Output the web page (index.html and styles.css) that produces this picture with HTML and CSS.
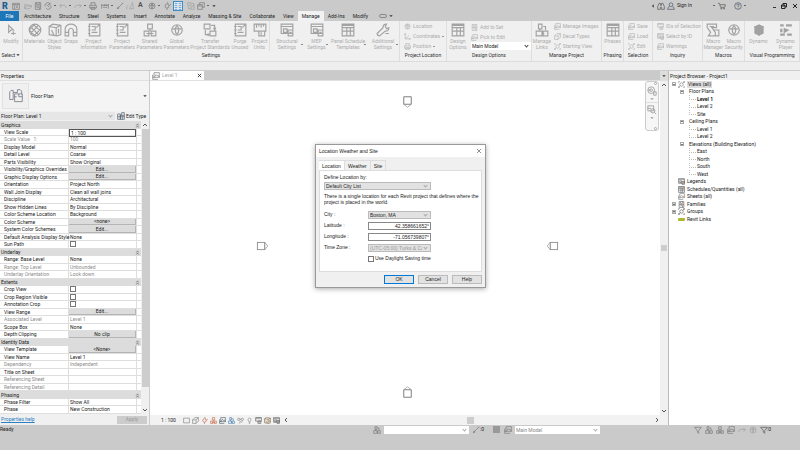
FILE: index.html
```
<!DOCTYPE html>
<html lang="en">
<head>
<meta charset="utf-8">
<title>Project1 - Floor Plan: Level 1</title>
<link rel="stylesheet" href="styles.css">
</head>
<body>
<svg class="defs" aria-hidden="true">
  <symbol id="i-home" viewBox="0 0 12 12"><path d="M1 2h10v9H1zM1 4h10M4 4v7M6 6h3M6 8h3"/></symbol>
  <symbol id="i-open" viewBox="0 0 12 12"><path d="M1 10V4h4l1 1h4v2M1 10l3-4h8l-3 4z"/></symbol>
  <symbol id="i-save" viewBox="0 0 12 12"><path d="M2 1h8v10H2zM4 1v3h4V1M2 6h8M4 8h4v3"/></symbol>
  <symbol id="i-sync" viewBox="0 0 12 12"><path d="M2 7a4 4 0 0 1 7-4M10 5a4 4 0 0 1-7 4M9 1v3H6M4 4l4 4"/></symbol>
  <symbol id="i-undo" viewBox="0 0 12 12"><path d="M4 3L1 6l3 2M1 5h7q3 0 3 4"/></symbol>
  <symbol id="i-redo" viewBox="0 0 12 12"><path d="M8 3l3 3-3 2M11 5H4Q1 5 1 9"/></symbol>
  <symbol id="i-print" viewBox="0 0 12 12"><path d="M3 5V1h6v4M1 5h10v4H1zM3 8h6v3H3z"/></symbol>
  <symbol id="i-measure" viewBox="0 0 12 12"><path d="M1 3v7M11 3v7M1 5h10M3 8h6M5 3v3M8 3v3"/></symbol>
  <symbol id="i-line" viewBox="0 0 12 12"><path d="M2 10L10 2M2 10l1-3M2 10l3-1M9 1l2 2"/></symbol>
  <symbol id="i-tag" viewBox="0 0 12 12"><path d="M1 11V7l3-3M5 10l5-8 1 8zM9 2V0"/></symbol>
  <symbol id="i-globe" viewBox="0 0 12 12"><circle cx="6" cy="6" r="4.500"/><path d="M2 5h8M6 2q-3 4 0 8M6 2q3 4 0 8"/></symbol>
  <symbol id="i-thin" viewBox="0 0 12 12"><path d="M1 2h4M1 5h4M1 8h4M1 11h4M7 2h4M7 5h4M7 8h4M7 11h4"/></symbol>
  <symbol id="i-windows" viewBox="0 0 12 12"><path d="M1 4h7v7H1zM4 4V1h7v7H8M1 6h7"/></symbol>
  <symbol id="i-section" viewBox="0 0 12 12"><circle cx="6" cy="6" r="3"/><path d="M6 0l2 3M6 9v3M9 6l3-3"/></symbol>
  <symbol id="i-cursor" viewBox="0 0 12 12"><path d="M4 2v6l2-2 2 0zM8 7v3M6 9h4"/></symbol>
  <symbol id="i-material" viewBox="0 0 12 12"><circle cx="6" cy="6" r="5"/><path d="M2 3l7 7M4 1l7 6M1 6l5 5M9 2l-7 7M11 5l-6 6M6 1L1 6"/></symbol>
  <symbol id="i-object" viewBox="0 0 12 12"><path d="M1 3l3-2 7 1v8l-3 1-7-1zM1 3l6 1v7M7 4l4-2M3 6l2 4M9 5v4"/></symbol>
  <symbol id="i-snap" viewBox="0 0 12 12"><path d="M1 11V5a5 4 0 0 1 10 0v6H8V6q-2-3-4 0v5zM1 8h3M8 8h3"/></symbol>
  <symbol id="i-sheet" viewBox="0 0 12 12"><path d="M2 1h9v10H2zM4 3h3v3H4M8 4l3-3M4 8h5M1 3h2M1 6h2M1 9h2"/></symbol>
  <symbol id="i-shared" viewBox="0 0 12 12"><path d="M4 1h4v4H4zM1 7h4v4H1zM7 7h4v4H7zM6 5v2M3 9h6"/></symbol>
  <symbol id="i-transfer" viewBox="0 0 12 12"><path d="M1 1h5v4H1zM6 7h5v4H6zM7 2h3v3M9 4l1 2 1-2M2 6v4h3M4 9l1 1-1 1"/></symbol>
  <symbol id="i-units" viewBox="0 0 12 12"><path d="M1 1h10v6H1zM3 1v3M5 1v2M7 1v3M9 1v2M5 7h5v4H5zM7 8v2"/></symbol>
  <symbol id="i-grid" viewBox="0 0 12 12"><path d="M1 1h10v10H1zM1 4h10M1 7h10M5 4v7M8 4v7M1 2h10"/></symbol>
  <symbol id="i-struct" viewBox="0 0 12 12"><path d="M1 1h10v8H1zM1 3h10M3 5h3v3H3zM7 6h4v5H7zM8 8h2"/></symbol>
  <symbol id="i-wrench" viewBox="0 0 12 12"><path d="M1 9l5-5q0-3 3-3L8 3l1 2 2-1q0 3-3 3l-5 4q-2 0-2-2zM8 9h3"/></symbol>
  <symbol id="i-axes" viewBox="0 0 12 12"><path d="M2 1v9h9M2 10l7-6M1 3l1-2 1 2M9 9l2 1-2 1"/></symbol>
  <symbol id="i-links" viewBox="0 0 12 12"><path d="M1 7h5v4H1zM3 1h3v4H3zM7 3h2v3M7 7h4v4H7zM6 9h2M4 5v2"/></symbol>
  <symbol id="i-image" viewBox="0 0 12 12"><path d="M3 1h8v7H3zM1 4v7h8M4 7l2-3 2 2 1-1 2 3M1 8h3"/></symbol>
  <symbol id="i-macro" viewBox="0 0 12 12"><path d="M1 1h8v3H5l3 4v3H2l2-3-3-4zM7 6h4v5H8M3 3h4"/></symbol>
  <symbol id="i-cube" viewBox="0 0 12 12"><path class="solid" d="M2 3l4-2 4 2v6l-4 2-4-2z"/><path d="M2 3l4 2 4-2M6 5v6"/></symbol>
  <symbol id="i-player" viewBox="0 0 12 12"><path class="solid" d="M1 1h3v2H1zM6 1h5v2H6zM1 5h2v3H1zM4 4l5 2-5 3zM1 9h4v2H1zM7 9h4v2H7z"/></symbol>
  <symbol id="i-plan" viewBox="0 0 20 20"><path d="M1 15V4l2-2h3v3h6M1 15h5M12 5V1h4l2 2v4M8 7h11v11H8zM8 11h3M14 7v4h5M6 5v10"/></symbol>
  <symbol id="i-edit" viewBox="0 0 12 12"><path d="M1 3h4v8H1zM5 5h6v6H5zM7 5V1h4v4M1 7h10M8 7v4"/></symbol>
  <symbol id="i-view" viewBox="0 0 12 12"><circle cx="6" cy="6" r="3"/><path d="M1 3V1h2M9 1h2v2M11 9v2H9M3 11H1V9M4 8L1 11M8 4l3-3"/></symbol>
  <symbol id="i-person" viewBox="0 0 12 12"><circle cx="6" cy="4" r="2.800"/><path d="M4 7q-3 0-3 4h10q0-4-3-4"/></symbol>
  <symbol id="i-binoc" viewBox="0 0 12 12"><path d="M3 2h2l1 3 1-3h2l2 5v4H7V8H5v3H1V7zM5 5h2"/></symbol>
  <symbol id="i-cart" viewBox="0 0 12 12"><path d="M0 2h2l2 6h6l1-4H3"/><circle cx="5" cy="10" r=".8"/><circle cx="9" cy="10" r=".8"/></symbol>
  <symbol id="i-help" viewBox="0 0 12 12"><circle cx="6" cy="6" r="5"/><path d="M4 5q0-2 2-2t2 1.500q0 1-2 2V8M6 9v.6"/></symbol>
  <symbol id="i-funnel" viewBox="0 0 12 12"><path d="M1 2h10L7 7v4L5 9V7z"/></symbol>
  <symbol id="i-box3d" viewBox="0 0 12 12"><path d="M1 5h6v6H1zM1 5l4-4h6v6l-4 4M7 5l4-4"/></symbol>
  <symbol id="i-box" viewBox="0 0 12 12"><path d="M1 2h10v8H1z"/></symbol>
  <symbol id="i-glasses" viewBox="0 0 12 12"><circle cx="3" cy="4" r="2"/><circle cx="9" cy="4" r="2"/><path d="M5 4h2M6 7l-2 4M9 7l-2 3"/></symbol>
  <symbol id="i-bulb" viewBox="0 0 12 12"><path d="M5 9q0-2-1-3a2.500 2.500 0 1 1 4 0q-1 1-1 3zM5 11h2"/></symbol>
  <symbol id="i-x" viewBox="0 0 12 12"><path d="M2 2l8 8M10 2l-8 8"/></symbol>
  <symbol id="i-down" viewBox="0 0 12 12"><path d="M2 4l4 4 4-4"/></symbol>
  <symbol id="i-up" viewBox="0 0 12 12"><path d="M2 8l4-4 4 4"/></symbol>
  <symbol id="i-dblup" viewBox="0 0 12 12"><path d="M3 6l3-4 3 4M3 11l3-4 3 4"/></symbol>
  <symbol id="i-tri" viewBox="0 0 12 12"><path class="solid" d="M1 4h10L6 9z"/></symbol>
  <symbol id="i-orbit" viewBox="0 0 12 12"><circle cx="5" cy="5" r="4"/><circle cx="5" cy="5" r="1.500"/><path d="M8 7h3v4H8zM1 5h3"/></symbol>
  <symbol id="i-zoomr" viewBox="0 0 12 12"><path d="M1 1h7v6H1zM1 4h4M9 9l2 2"/><circle cx="7" cy="7" r="2.500"/></symbol>
  <symbol id="i-mark" viewBox="0 0 12 16"><path d="M1 1h10v10H1z"/><path class="faint" d="M1 11l5 4 5-4"/></symbol>
</svg>

<header class="top">
  <div class="quick">
    <b class="logo">R</b>
    <svg class="ic"><use href="#i-home"/></svg>
    <svg class="ic pale push"><use href="#i-open"/></svg>
    <svg class="ic"><use href="#i-save"/></svg>
    <svg class="ic"><use href="#i-sync"/></svg><i class="dot"></i>
    <svg class="ic pale"><use href="#i-undo"/></svg><i class="dot"></i>
    <svg class="ic pale"><use href="#i-redo"/></svg><i class="dot"></i>
    <svg class="ic"><use href="#i-print"/></svg>
    <svg class="ic push"><use href="#i-measure"/></svg><i class="dot"></i>
    <svg class="ic"><use href="#i-line"/></svg>
    <svg class="ic pale"><use href="#i-tag"/></svg>
    <b class="letter">A</b>
    <svg class="ic push"><use href="#i-globe"/></svg><i class="dot"></i>
    <svg class="ic"><use href="#i-section"/></svg>
    <span class="thin"><svg class="ic"><use href="#i-thin"/></svg></span>
    <svg class="ic pale push"><use href="#i-transfer"/></svg>
    <svg class="ic"><use href="#i-windows"/></svg><i class="dot"></i>
    <svg class="tri"><use href="#i-tri"/></svg>
    <div class="account">
      <svg class="tri side"><use href="#i-tri"/></svg>
      <svg class="ic dark"><use href="#i-binoc"/></svg>
      <svg class="ic navy"><use href="#i-person"/></svg>
      <span class="sign">Sign In</span>
      <i class="dot"></i>
      <svg class="ic dark"><use href="#i-cart"/></svg>
      <svg class="ic navy helpic"><use href="#i-help"/></svg><i class="dot"></i>
      <span class="winbtns"><i class="min"></i><svg class="ic black"><use href="#i-windows"/></svg><svg class="ic black heavy"><use href="#i-x"/></svg></span>
    </div>
  </div>
  <nav class="tabs">
    <a class="file" href="#file">File</a><a href="#t">Architecture</a><a href="#t">Structure</a><a href="#t">Steel</a><a href="#t">Systems</a><a href="#t">Insert</a><a href="#t">Annotate</a><a href="#t">Analyze</a><a href="#t">Massing &amp; Site</a><a href="#t">Collaborate</a><a href="#t">View</a><a class="on" href="#t">Manage</a><a href="#t">Add-Ins</a><a href="#t">Modify</a>
    <span class="pill"></span><svg class="tri"><use href="#i-tri"/></svg>
  </nav>
</header>

<section class="ribbon">
  <div class="panel">
    <div class="big"><button><svg><use href="#i-cursor"/></svg>Modify</button></div>
    <h2>Select <svg class="tri"><use href="#i-tri"/></svg></h2>
  </div>
  <div class="panel">
    <div class="big settings">
      <button><svg><use href="#i-material"/></svg>Materials</button>
      <button><svg><use href="#i-object"/></svg>Object<br>Styles</button>
      <button><svg><use href="#i-snap"/></svg>Snaps</button>
      <button><svg><use href="#i-sheet"/></svg>Project<br>Information</button>
      <button><svg><use href="#i-sheet"/></svg>Project<br>Parameters</button>
      <button><svg><use href="#i-shared"/></svg>Shared<br>Parameters</button>
      <button><svg><use href="#i-globe"/></svg>Global<br>Parameters</button>
      <button><svg><use href="#i-transfer"/></svg>Transfer<br>Project Standards</button>
      <button><svg><use href="#i-sheet"/></svg>Purge<br>Unused</button>
      <button><svg><use href="#i-units"/></svg>Project<br>Units</button>
      <button class="drop ruled"><svg><use href="#i-struct"/></svg>Structural<br>Settings</button>
      <button class="drop"><svg><use href="#i-struct"/></svg>MEP<br>Settings</button>
      <button class="drop"><svg><use href="#i-grid"/></svg>Panel Schedule<br>Templates</button>
      <button class="drop"><svg><use href="#i-wrench"/></svg>Additional<br>Settings</button>
    </div>
    <h2>Settings</h2>
  </div>
  <div class="panel">
    <div class="small">
      <button><svg><use href="#i-globe"/></svg>Location</button>
      <button><svg><use href="#i-axes"/></svg>Coordinates<i class="dot"></i></button>
      <button><svg><use href="#i-print"/></svg>Position<i class="dot"></i></button>
    </div>
    <h2>Project Location</h2>
  </div>
  <div class="panel">
    <div class="mix options">
      <div class="big"><button><svg><use href="#i-grid"/></svg>Design<br>Options</button></div>
      <div class="small">
        <button><svg><use href="#i-save"/></svg>Add to Set</button>
        <button><svg><use href="#i-image"/></svg>Pick to Edit</button>
        <span class="pick solid-arrow"><select aria-label="Active design option"><option>Main Model</option></select></span>
      </div>
    </div>
    <h2>Design Options</h2>
  </div>
  <div class="panel">
    <div class="mix">
      <div class="big"><button><svg><use href="#i-links"/></svg>Manage<br>Links</button></div>
      <div class="small">
        <button><svg><use href="#i-image"/></svg>Manage Images</button>
        <button><svg><use href="#i-box3d"/></svg>Decal Types</button>
        <button><svg><use href="#i-view"/></svg>Starting View</button>
      </div>
    </div>
    <h2>Manage Project</h2>
  </div>
  <div class="panel">
    <div class="big"><button><svg><use href="#i-grid"/></svg>Phases</button></div>
    <h2>Phasing</h2>
  </div>
  <div class="panel">
    <div class="small">
      <button><svg><use href="#i-image"/></svg>Save</button>
      <button><svg><use href="#i-image"/></svg>Load</button>
      <button><svg><use href="#i-view"/></svg>Edit</button>
    </div>
    <h2>Selection</h2>
  </div>
  <div class="panel">
    <div class="small">
      <button><svg><use href="#i-units"/></svg>IDs of Selection</button>
      <button><svg><use href="#i-struct"/></svg>Select by ID</button>
      <button><svg><use href="#i-image"/></svg>Warnings</button>
    </div>
    <h2>Inquiry</h2>
  </div>
  <div class="panel">
    <div class="big pair">
      <button><svg><use href="#i-macro"/></svg>Macro<br>Manager</button>
      <button><svg><use href="#i-globe"/></svg>Macro<br>Security</button>
    </div>
    <h2>Macros</h2>
  </div>
  <div class="panel">
    <div class="big pair">
      <button><svg><use href="#i-cube"/></svg>Dynamo</button>
      <button><svg><use href="#i-player"/></svg>Dynamo<br>Player</button>
    </div>
    <h2>Visual Programming</h2>
  </div>
</section>
<div class="optbar"></div>

<main class="work">
  <aside class="props">
    <h1>Properties</h1>
    <div class="type"><span class="thumb"><svg><use href="#i-plan"/></svg></span><span>Floor Plan</span><svg class="tri"><use href="#i-tri"/></svg></div>
    <div class="inst"><span class="pick"><select aria-label="Instance"><option>Floor Plan: Level 1</option></select></span><button><svg class="ic navy"><use href="#i-edit"/></svg>Edit Type</button></div>
    <div class="gridwrap">
      <div class="pgrid">
        <div class="grp">Graphics<svg><use href="#i-dblup"/></svg></div>
        <div class="row"><label for="vs">View Scale</label><input id="vs" type="text" value="1 : 100"></div>
        <div class="row off"><span>Scale Value &nbsp; 1:</span><span>100</span></div>
        <div class="row"><span>Display Model</span><span>Normal</span></div>
        <div class="row"><span>Detail Level</span><span>Coarse</span></div>
        <div class="row"><span>Parts Visibility</span><span>Show Original</span></div>
        <div class="row"><span>Visibility/Graphics Overrides</span><button>Edit...</button></div>
        <div class="row"><span>Graphic Display Options</span><button>Edit...</button></div>
        <div class="row"><span>Orientation</span><span>Project North</span></div>
        <div class="row"><span>Wall Join Display</span><span>Clean all wall joins</span></div>
        <div class="row"><span>Discipline</span><span>Architectural</span></div>
        <div class="row"><span>Show Hidden Lines</span><span>By Discipline</span></div>
        <div class="row"><span>Color Scheme Location</span><span>Background</span></div>
        <div class="row"><span>Color Scheme</span><button>&lt;none&gt;</button></div>
        <div class="row"><span>System Color Schemes</span><button>Edit...</button></div>
        <div class="row"><span>Default Analysis Display Style</span><span>None</span></div>
        <div class="row"><label for="sp">Sun Path</label><span><input id="sp" type="checkbox"></span></div>
        <div class="grp">Underlay<svg><use href="#i-dblup"/></svg></div>
        <div class="row"><span>Range: Base Level</span><span>None</span></div>
        <div class="row off"><span>Range: Top Level</span><span>Unbounded</span></div>
        <div class="row off"><span>Underlay Orientation</span><span>Look down</span></div>
        <div class="grp">Extents<svg><use href="#i-dblup"/></svg></div>
        <div class="row"><label for="cv">Crop View</label><span><input id="cv" type="checkbox"></span></div>
        <div class="row"><label for="cr">Crop Region Visible</label><span><input id="cr" type="checkbox"></span></div>
        <div class="row"><label for="ac">Annotation Crop</label><span><input id="ac" type="checkbox"></span></div>
        <div class="row"><span>View Range</span><button>Edit...</button></div>
        <div class="row off"><span>Associated Level</span><span>Level 1</span></div>
        <div class="row"><span>Scope Box</span><span>None</span></div>
        <div class="row"><span>Depth Clipping</span><button>No clip</button></div>
        <div class="grp">Identity Data<svg><use href="#i-dblup"/></svg></div>
        <div class="row"><span>View Template</span><button>&lt;None&gt;</button></div>
        <div class="row"><span>View Name</span><span>Level 1</span></div>
        <div class="row off"><span>Dependency</span><span>Independent</span></div>
        <div class="row"><span>Title on Sheet</span><span></span></div>
        <div class="row off"><span>Referencing Sheet</span><span></span></div>
        <div class="row off"><span>Referencing Detail</span><span></span></div>
        <div class="grp">Phasing<svg><use href="#i-dblup"/></svg></div>
        <div class="row"><span>Phase Filter</span><span>Show All</span></div>
        <div class="row"><span>Phase</span><span>New Construction</span></div>
      </div>
      <div class="vbar"><svg class="arr"><use href="#i-up"/></svg><i class="long"></i><svg class="arr"><use href="#i-down"/></svg></div>
    </div>
    <div class="pfoot"><a href="#help">Properties help</a><button disabled>Apply</button></div>
  </aside>

  <section class="canvas">
    <div class="docs"><span class="doc"><svg class="ic"><use href="#i-image"/></svg>Level 1<svg class="ic black heavy close"><use href="#i-x"/></svg></span><span class="more"><svg class="tri"><use href="#i-tri"/></svg></span></div>
    <div class="sheet">
      <div class="drawing">
        <svg class="mark north"><use href="#i-mark"/></svg>
        <svg class="mark west"><use href="#i-mark"/></svg>
        <svg class="mark east"><use href="#i-mark"/></svg>
        <svg class="mark south"><use href="#i-mark"/></svg>
        <div class="navbar"><i class="ring"></i><svg class="nav"><use href="#i-orbit"/></svg><svg class="tri"><use href="#i-tri"/></svg><hr><svg class="nav green"><use href="#i-zoomr"/></svg><svg class="tri"><use href="#i-tri"/></svg><i class="ring last"></i></div>
      </div>
      <div class="vbar"><svg class="arr"><use href="#i-up"/></svg><i class="short"></i><svg class="arr"><use href="#i-down"/></svg></div>
    </div>
    <div class="vcb">
      <span class="scale">1 : 100</span>
      <svg class="ic"><use href="#i-box"/></svg><svg class="ic"><use href="#i-box3d"/></svg><svg class="ic red"><use href="#i-section"/></svg><svg class="ic red"><use href="#i-shared"/></svg><svg class="ic navy"><use href="#i-image"/></svg><svg class="ic blue"><use href="#i-links"/></svg><svg class="ic"><use href="#i-glasses"/></svg><svg class="ic"><use href="#i-bulb"/></svg><svg class="ic dark"><use href="#i-units"/></svg><svg class="ic brown"><use href="#i-object"/></svg><svg class="ic dark"><use href="#i-struct"/></svg><svg class="arr left"><use href="#i-down"/></svg>
      <i class="hthumb"></i><svg class="arr right"><use href="#i-down"/></svg>
    </div>

    <form class="dialog">
      <div class="dhead"><h2>Location Weather and Site</h2><svg class="ic black"><use href="#i-x"/></svg></div>
      <div class="dtabs"><button type="button" class="on">Location</button><button type="button">Weather</button><button type="button">Site</button></div>
      <div class="dpage">
        <label for="by">Define Location by:</label>
        <span class="pick wide"><select id="by"><option>Default City List</option></select></span>
        <p>There is a single location for each Revit project that defines where the project is placed in the world.</p>
        <div class="fields">
          <label for="city">City :</label><span class="pick"><select id="city"><option>Boston, MA</option></select></span>
          <label for="lat">Latitude :</label><input id="lat" type="text" value="42.358661652°">
          <label for="lon">Longitude :</label><input id="lon" type="text" value="-71.056739807°">
          <label for="tz">Time Zone :</label><span class="pick"><select id="tz" disabled><option>(UTC-05:00) Turks &amp; Caicos</option></select></span>
          <span></span><label class="dst"><input type="checkbox">Use Daylight Saving time</label>
        </div>
      </div>
      <div class="dbtns"><button type="button" class="ok">OK</button><button type="button">Cancel</button><button type="button">Help</button></div>
    </form>
  </section>

  <aside class="browser">
    <h1>Project Browser - Project1</h1>
    <ul class="tree">
      <li class="root"><i class="pm"></i><svg class="ic"><use href="#i-view"/></svg><span class="sel">Views (all)</span></li>
      <li class="l1"><i class="pm"></i>Floor Plans</li>
      <li class="l2"><b>Level 1</b></li>
      <li class="l2">Level 2</li>
      <li class="l2">Site</li>
      <li class="l1"><i class="pm"></i>Ceiling Plans</li>
      <li class="l2">Level 1</li>
      <li class="l2">Level 2</li>
      <li class="l1"><i class="pm"></i>Elevations (Building Elevation)</li>
      <li class="l2">East</li>
      <li class="l2">North</li>
      <li class="l2">South</li>
      <li class="l2">West</li>
      <li class="root"><i class="pm none"></i><svg class="ic dark"><use href="#i-struct"/></svg>Legends</li>
      <li class="root"><i class="pm none"></i><svg class="ic dark"><use href="#i-grid"/></svg>Schedules/Quantities (all)</li>
      <li class="root"><i class="pm none"></i><svg class="ic"><use href="#i-image"/></svg>Sheets (all)</li>
      <li class="root"><i class="pm plus"></i><svg class="ic dark"><use href="#i-save"/></svg>Families</li>
      <li class="root"><i class="pm plus"></i><svg class="ic dark"><use href="#i-view"/></svg>Groups</li>
      <li class="root"><i class="pm none"></i><i class="chain"></i>Revit Links</li>
    </ul>
  </aside>
</main>

<footer class="status">
  <span class="ready">Ready</span>
  <svg class="ic"><use href="#i-links"/></svg>
  <span class="pick"><select aria-label="Workset"><option></option></select></span>
  <svg class="ic"><use href="#i-line"/></svg><span class="count">:0</span>
  <i class="block"></i><svg class="ic"><use href="#i-image"/></svg>
  <span class="pick"><select class="soft" aria-label="Design option"><option>Main Model</option></select></span>
  <span class="filters"><svg class="ic"><use href="#i-funnel"/></svg><svg class="ic"><use href="#i-links"/></svg><svg class="ic"><use href="#i-shared"/></svg><svg class="ic"><use href="#i-image"/></svg><svg class="ic pale"><use href="#i-redo"/></svg><svg class="ic pale"><use href="#i-globe"/></svg><svg class="ic dark"><use href="#i-funnel"/></svg><span>:0</span></span>
</footer>
</body>
</html>
```
FILE: styles.css
```
* { box-sizing: border-box; }
body {
  margin: 0;
  min-height: 100vh;
  display: grid;
  grid-template-rows: auto auto 10px 1fr auto;
  background: #cacaca;
  color: #222;
  font: 5px/7px Roboto, "Noto Sans", sans-serif;
}
h1, h2, p, ul { margin: 0; padding: 0; font: inherit; list-style: none; }
button, input, select { margin: 0; padding: 0; border: 0; border-radius: 0; background: none; color: inherit; font: inherit; appearance: none; outline: 0; }
a { color: inherit; text-decoration: none; }
svg { fill: none; stroke: currentColor; stroke-width: 1; flex: none; }
.solid { fill: currentColor; stroke: none; }
.defs { position: absolute; width: 0; height: 0; }
.ic { width: 8px; height: 8px; color: #777; }
.pale { color: #a0a0a0; }
.dark { color: #555; }
.black { color: #222; }
.navy { color: #456; }
.blue { color: #3976aa; }
.red { color: #c0603a; }
.brown { color: #7a6238; }
.green { color: #8a9c8c; }
.heavy { stroke-width: 2; }
.tri { width: 4px; height: 4px; color: #333; }
.dot { flex: none; width: 2px; height: 1px; background: #666; }

/* title bar and ribbon tabs */
.quick { display: flex; align-items: center; height: 11px; gap: 2px; padding-left: 2px; }
.quick .dot { margin-right: 1px; }
.logo { width: 8px; font-size: 9px; line-height: 10px; font-weight: 900; color: #1d5c93; }
.letter { width: 6px; margin-left: 2px; font-size: 7px; color: #555; }
.push { margin-left: 2px; }
.thin { display: grid; place-items: center; width: 10px; height: 10px; border: 1px solid #3c8cc8; background: #e4f0fa; }
.thin .ic { color: #3976aa; }
.account { display: flex; align-items: center; gap: 2px; margin-left: auto; padding-right: 2px; }
.side { transform: rotate(90deg); }
.sign { margin-right: 19px; }
.account .helpic { margin-left: 6px; }
.winbtns { display: flex; align-items: center; gap: 5px; margin-left: 24px; }
.winbtns .ic { width: 6px; height: 6px; stroke-width: 2; }
.min { width: 3px; height: 1px; margin-top: 4px; background: #333; }
.tabs { display: flex; align-items: center; height: 10px; }
.tabs a { padding: 2px 4px 1px; }
.tabs .file { width: 19px; margin-right: 1px; text-align: center; background: #1d76b8; color: #fff; }
.tabs .on { background: #f2f2f2; }
.pill { width: 8px; height: 4px; margin: 0 2px 0 7px; border: 1px solid #888; border-radius: 2px; }

/* ribbon */
.ribbon {
  display: grid;
  grid-template-columns: 23fr 377fr 47fr 85fr 70fr 22fr 29fr 50fr 42fr 55fr;
  height: 40px;
  background: #f0f0f0;
}
.panel { display: flex; flex-direction: column; min-width: 0; border-right: 1px solid #dedede; color: #acacac; white-space: nowrap; }
.panel h2 { margin-top: auto; padding-bottom: 2px; text-align: center; color: #333; }
.big { display: grid; height: 30px; }
.big button { position: relative; display: flex; flex-direction: column; align-items: center; min-width: 0; padding-top: 2px; line-height: 6px; text-align: center; }
.big svg { width: 14px; height: 14px; margin-bottom: 1px; color: #a2a2a2; }
.settings { grid-template-columns: 23fr 17fr 16fr 29fr 28fr 27fr 27fr 40fr 20fr 19fr 35fr 25fr 38fr 32fr; }
.pair { grid-template-columns: 1fr 1fr; }
.ruled { border-left: 1px solid #dedede; }
.drop::after { content: ""; position: absolute; right: 1px; bottom: 6px; width: 2px; height: 1px; background: #888; }
.small { display: flex; flex-direction: column; height: 30px; padding: 1px 0 0 4px; }
.small button { display: flex; align-items: center; gap: 2px; height: 10px; }
.small svg { width: 7px; height: 7px; }
.small .dot { background: #999; }
.mix { display: grid; grid-template-columns: 20fr 50fr; }
.mix .small { padding-left: 2px; }
.options { grid-template-columns: 22fr 62fr; }
.optbar { background: #eee; border-top: 1px solid #dcdcdc; border-bottom: 1px solid #ccc; }

.pick { position: relative; display: block; height: 8px; background: #fff; }
.pick select { display: block; width: 100%; height: 100%; padding: 0 8px 0 1px; color: #222; }
.pick .soft { color: #888; }
.pick::after { content: ""; position: absolute; right: 3px; top: 2px; width: 2px; height: 2px; border: solid #aaa; border-width: 0 1px 1px 0; box-sizing: content-box; transform: rotate(45deg); pointer-events: none; }
.solid-arrow::after { border-color: #444; }

/* work area */
.work { display: grid; grid-template-columns: 150px 1fr 132px; min-height: 0; }
.props { display: flex; flex-direction: column; background: #f0f0f0; border-right: 1px solid #ccc; white-space: nowrap; }
.props h1, .browser h1 { height: 9px; padding-left: 1px; line-height: 11px; }
.type { display: flex; align-items: center; gap: 2px; height: 31px; padding: 2px; background: #f4f4f4; border-top: 1px solid #e0e0e0; }
.type .tri { margin-left: auto; }
.thumb { display: grid; place-items: center; width: 27px; height: 26px; border: 1px solid #e2e2e2; background: #f0f0f0; }
.thumb svg { width: 14px; height: 14px; color: #667; }
.inst { display: flex; align-items: center; height: 10px; }
.inst .pick { width: 115px; background: #e6e6e6; }
.inst button { display: flex; align-items: center; gap: 1px; margin-left: 2px; }
.gridwrap { display: flex; flex: 1; background: #fff; }
.pgrid { flex: 1; display: grid; grid-auto-rows: 8px 7px; align-content: start; }
.grp { display: flex; align-items: center; justify-content: space-between; padding: 0 1px; background: #dcdcdc; }
.grp svg { width: 5px; height: 5px; }
.row { display: grid; grid-template-columns: 69px 1fr 5px; grid-template-rows: 1fr; border-bottom: 1px solid #dedede; line-height: 6px; }
.row::after { content: ""; border-left: 1px solid #dedede; }
.row > :first-child { padding-left: 4px; border-right: 1px solid #dedede; }
.row > span + span, .row > label + span { padding-left: 1px; }
.row.off { color: #8c8c8c; }
.row button { background: #dcdcdc; border: solid #b4b4b4; border-width: 0 1px 1px 0; line-height: 5px; }
.row input[type="text"] { min-width: 0; padding-left: 1px; border: 1px solid #555; line-height: 4px; }
input[type="checkbox"] { display: block; width: 6px; height: 6px; border: 1px solid #777; background: #fff; }
.vbar { display: flex; flex-direction: column; align-items: center; width: 8px; background: #f0f0f0; }
.arr { width: 6px; height: 6px; margin: 1px; color: #555; stroke-width: 2; }
.long { width: 7px; flex: 0 0 258px; background: #cdcdcd; }
.long + .arr { margin-top: auto; }
.pfoot { display: flex; align-items: center; justify-content: space-between; height: 11px; padding: 0 2px 0 1px; }
.pfoot a { color: #2a7fc0; text-decoration: underline; }
.pfoot button { width: 30px; height: 8px; background: #ccc; color: #999; }

.canvas { position: relative; display: flex; flex-direction: column; min-width: 0; background: #fff; }
.docs { display: flex; justify-content: space-between; height: 10px; background: #cacaca; border-bottom: 1px solid #e0e0e0; }
.doc { display: flex; align-items: center; gap: 2px; width: 54px; padding: 0 2px; background: #fff; color: #aaa; }
.close { width: 5px; height: 5px; margin-left: auto; }
.more { display: grid; place-items: center; width: 8px; background: #ddd; }
.sheet { display: flex; flex: 1; min-height: 0; }
.drawing { position: relative; flex: 1; }
.mark { position: absolute; width: 9px; height: 12px; color: #555; }
.faint { stroke: #999; }
.north { left: 253px; top: 15px; }
.south { left: 253px; bottom: 17px; transform: rotate(180deg); }
.west { left: 108px; top: 159px; transform: rotate(-90deg); }
.east { left: 398px; top: 159px; transform: rotate(90deg); }
.navbar { position: absolute; top: 0; right: 1px; width: 14px; height: 50px; display: flex; flex-direction: column; align-items: center; border: 1px solid #ccc; border-radius: 3px; background: #f6f6f6; }
.navbar hr { width: 100%; margin: 1px 0; border: 0; border-top: 1px solid #ddd; }
.nav { width: 10px; height: 12px; color: #999; }
.navbar .tri { color: #999; }
.ring { flex: none; align-self: flex-end; width: 3px; height: 3px; margin: 0 1px; border: 1px solid #aaa; border-radius: 50%; }
.last { margin-top: auto; }
.short { width: 6px; height: 6px; margin: auto; background: #cdcdcd; }
.vcb { display: flex; align-items: center; height: 10px; padding-left: 11px; background: #f2f2f2; }
.vcb .ic { width: 7px; height: 7px; margin-right: 2px; }
.scale { width: 22px; }
.left { transform: rotate(90deg); }
.right { transform: rotate(-90deg); margin-left: auto; margin-right: 8px; }
.hthumb { width: 7px; height: 7px; margin-left: 177px; background: #cdcdcd; }

/* dialog */
.dialog { position: absolute; left: 165px; top: 73px; width: 171px; padding: 0 3px 3px; border: 1px solid #999; background: #f0f0f0; box-shadow: 0 1px 5px #0005; font-family: "Liberation Sans", sans-serif; }
.dhead { display: flex; align-items: center; justify-content: space-between; height: 12px; margin: 0 -3px 3px; padding: 0 3px; background: #fff; }
.dhead .ic { width: 6px; height: 6px; }
.dtabs { display: flex; height: 10px; }
.dtabs button { padding: 1px 3px 0; border: 1px solid #ddd; border-width: 1px 1px 0 0; }
.dtabs .on { background: #fff; }
.dpage { padding: 3px 0 9px 4px; border: 1px solid #ddd; background: #fff; }
.dpage > label { display: block; height: 8px; }
.dialog .pick { background: #e2e2e2; border: 1px solid #bbb; }
.dialog .pick select { line-height: 6px; }
.dialog .pick::after { top: 1px; }
.dialog select:disabled { color: #999; opacity: 1; }
.wide { width: 107px; }
.dialog p { margin: 3px 0 6px; line-height: 6px; }
.fields { display: grid; grid-template-columns: 44px 63px; row-gap: 3px; }
.fields .pick, .fields input[type="text"] { height: 8px; }
.fields input[type="text"] { min-width: 0; padding-right: 1px; border: 1px solid #888; background: #fff; text-align: right; }
.dst { display: flex; align-items: center; gap: 1px; white-space: nowrap; }
.dbtns { display: flex; justify-content: flex-end; gap: 4px; margin-top: 3px; }
.dbtns button { width: 30px; height: 9px; border: 1px solid #bbb; background: #e2e2e2; }
.dbtns .ok { border-color: #0078d7; }

/* project browser */
.browser { background: #fff; border-left: 1px solid #bbb; white-space: nowrap; }
.browser h1 { background: #f0f0f0; }
.tree li { position: relative; display: flex; align-items: center; height: 8px; }
.tree li:nth-child(even) { height: 7px; }
.root { gap: 2px; padding-left: 3px; }
.root .ic { width: 7px; height: 7px; }
.l1 { gap: 5px; padding-left: 11px; }
.l2 { padding-left: 28px; }
.l2::before { content: ""; position: absolute; left: 20px; top: 0; width: 6px; height: 4px; border: dotted #bbb; border-width: 0 0 1px 1px; }
.pm { flex: none; width: 4px; height: 4px; background: linear-gradient(#777, #777) center / 2px 1px no-repeat; border: 1px solid #aaa; }
.none { visibility: hidden; }
.plus { background-color: #ccc; }
.sel { padding: 0 1px; background: #dedede; }
.chain { width: 7px; height: 3px; border-radius: 1px; background: #a8b830; }

/* status bar */
.status { display: flex; align-items: flex-start; height: 26px; padding-top: 1px; }
.ready { width: 373px; }
.status .pick { width: 85px; margin: 0 3px; }
.count { width: 13px; }
.block { width: 7px; height: 7px; margin-right: 4px; background: #999; }
.filters { display: flex; gap: 3px; margin: 0 29px 0 auto; }
.filters .dark { margin-right: -4px; }
```
